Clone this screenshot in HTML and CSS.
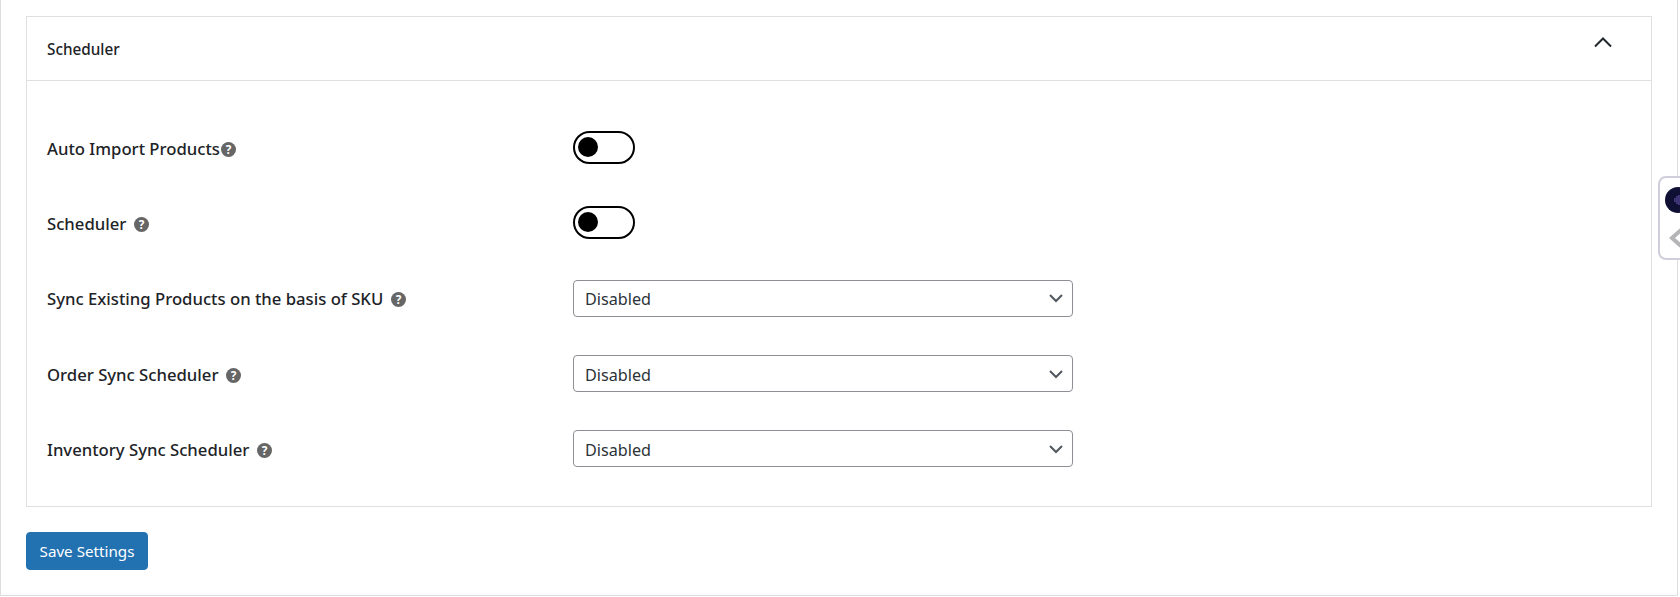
FILE: index.html
```html
<!DOCTYPE html>
<html lang="en">
<head>
<meta charset="utf-8">
<title>Scheduler</title>
<link rel="stylesheet" href="styles.css">
</head>
<body>
<div class="page">
  <section class="panel">
    <header class="panel-head">
      <h2 class="panel-title">Scheduler</h2>
      <svg class="collapse" width="20" height="12" viewBox="0 0 20 12"><path d="M2 10.5 10 2.5 18 10.5" fill="none" stroke="#23282d" stroke-width="2"/></svg>
    </header>
    <div class="panel-body">
      <div class="row">
        <label class="label tight">Auto Import Products<svg class="help" viewBox="0 0 14 14"><circle cx="7" cy="7" r="7" fill="#666"/><text x="7" y="11" text-anchor="middle" class="q">?</text></svg></label>
        <span class="toggle"><span class="knob"></span></span>
      </div>
      <div class="row">
        <label class="label">Scheduler<svg class="help" viewBox="0 0 14 14"><circle cx="7" cy="7" r="7" fill="#666"/><text x="7" y="11" text-anchor="middle" class="q">?</text></svg></label>
        <span class="toggle"><span class="knob"></span></span>
      </div>
      <div class="row">
        <label class="label">Sync Existing Products on the basis of SKU<svg class="help" viewBox="0 0 14 14"><circle cx="7" cy="7" r="7" fill="#666"/><text x="7" y="11" text-anchor="middle" class="q">?</text></svg></label>
        <div class="select"><span class="select-value">Disabled</span><svg width="16" height="10" viewBox="0 0 16 10"><path d="M2 2 8 8 14 2" fill="none" stroke="#50575e" stroke-width="2"/></svg></div>
      </div>
      <div class="row">
        <label class="label">Order Sync Scheduler<svg class="help" viewBox="0 0 14 14"><circle cx="7" cy="7" r="7" fill="#666"/><text x="7" y="11" text-anchor="middle" class="q">?</text></svg></label>
        <div class="select"><span class="select-value">Disabled</span><svg width="16" height="10" viewBox="0 0 16 10"><path d="M2 2 8 8 14 2" fill="none" stroke="#50575e" stroke-width="2"/></svg></div>
      </div>
      <div class="row">
        <label class="label">Inventory Sync Scheduler<svg class="help" viewBox="0 0 14 14"><circle cx="7" cy="7" r="7" fill="#666"/><text x="7" y="11" text-anchor="middle" class="q">?</text></svg></label>
        <div class="select"><span class="select-value">Disabled</span><svg width="16" height="10" viewBox="0 0 16 10"><path d="M2 2 8 8 14 2" fill="none" stroke="#50575e" stroke-width="2"/></svg></div>
      </div>
    </div>
  </section>
  <button class="save" type="button">Save Settings</button>
</div>
<aside class="side">
  <span class="side-logo"><svg width="6" height="14" viewBox="0 0 6 14"><path d="M1 5v4M3 3v8M5 2v10" stroke="#6f57b5" stroke-width="1" fill="none"/></svg></span>
  <svg class="side-arrow" width="14" height="20" viewBox="0 0 14 20"><path d="M12 2 3 10 12 18" fill="none" stroke="#b5b5b8" stroke-width="4"/></svg>
</aside>
</body>
</html>
```
FILE: styles.css
```css
* { box-sizing: border-box; }
html, body { margin: 0; height: 597px; overflow: hidden; background: #fff; }
body { font-family: "Noto Sans", "Open Sans", sans-serif; color: #1d2327; }
.page {
  width: 1678px;
  height: 596px;
  border: 1px solid #ddd;
  border-top: 0;
  padding: 16px 25px 0;
}
.panel { border: 1px solid #e0e0e0; width: 1626px; height: 491px; background: #fff; }
.panel-head {
  height: 64px;
  border-bottom: 1px solid #e0e0e0;
  padding: 0 38px 0 20px;
  display: flex;
  align-items: center;
  justify-content: space-between;
}
.panel-title { margin: 0; padding-top: 2px; font-size: 15.3px; font-weight: 500; line-height: 1; }
.collapse { margin-top: -14px; }
.panel-body { padding-top: 29px; }
.row { height: 75.3px; padding-left: 20px; display: grid; grid-template-columns: 526px 1fr; align-items: center; }
.label { font-size: 16.7px; font-weight: 500; display: flex; align-items: center; white-space: nowrap; padding-top: 1px; }
.help { width: 15px; height: 15px; margin-left: 8px; margin-top: 2px; flex: none; }
.tight .help { margin-left: 1px; }
.q { font: 700 11px "Noto Sans", sans-serif; fill: #fff; }
.toggle {
  display: flex;
  align-items: center;
  width: 62px;
  height: 33px;
  margin-top: -1px;
  border: 2px solid #000;
  border-radius: 17px;
  padding-left: 3px;
  background: #fff;
}
.knob { width: 20px; height: 20px; border-radius: 50%; background: #000; }
.select {
  width: 500px;
  height: 37px;
  border: 1px solid #8c8f94;
  border-radius: 4px;
  padding: 0 8px 0 11px;
  display: flex;
  align-items: center;
  justify-content: space-between;
  font-size: 16.2px;
  color: #2c3338;
}
.select-value { padding-top: 2px; }
.save {
  display: block;
  margin-top: 25px;
  width: 122px;
  height: 38px;
  padding: 0;
  background: #2271b1;
  border: 1px solid #2271b1;
  border-radius: 4px;
  color: #fff;
  font: 400 15.2px "Noto Sans", sans-serif;
}
.side {
  position: absolute;
  left: 1658px;
  top: 176px;
  width: 30px;
  height: 84px;
  background: #fff;
  border: 2px solid #cfcfdc;
  border-radius: 8px;
}
.side-logo {
  position: absolute;
  left: 5px;
  top: 9px;
  width: 26px;
  height: 26px;
  border-radius: 50%;
  background: #0f1033;
  display: flex;
  align-items: center;
  padding-left: 9px;
}
.side-arrow { position: absolute; left: 9px; top: 50px; }
```
